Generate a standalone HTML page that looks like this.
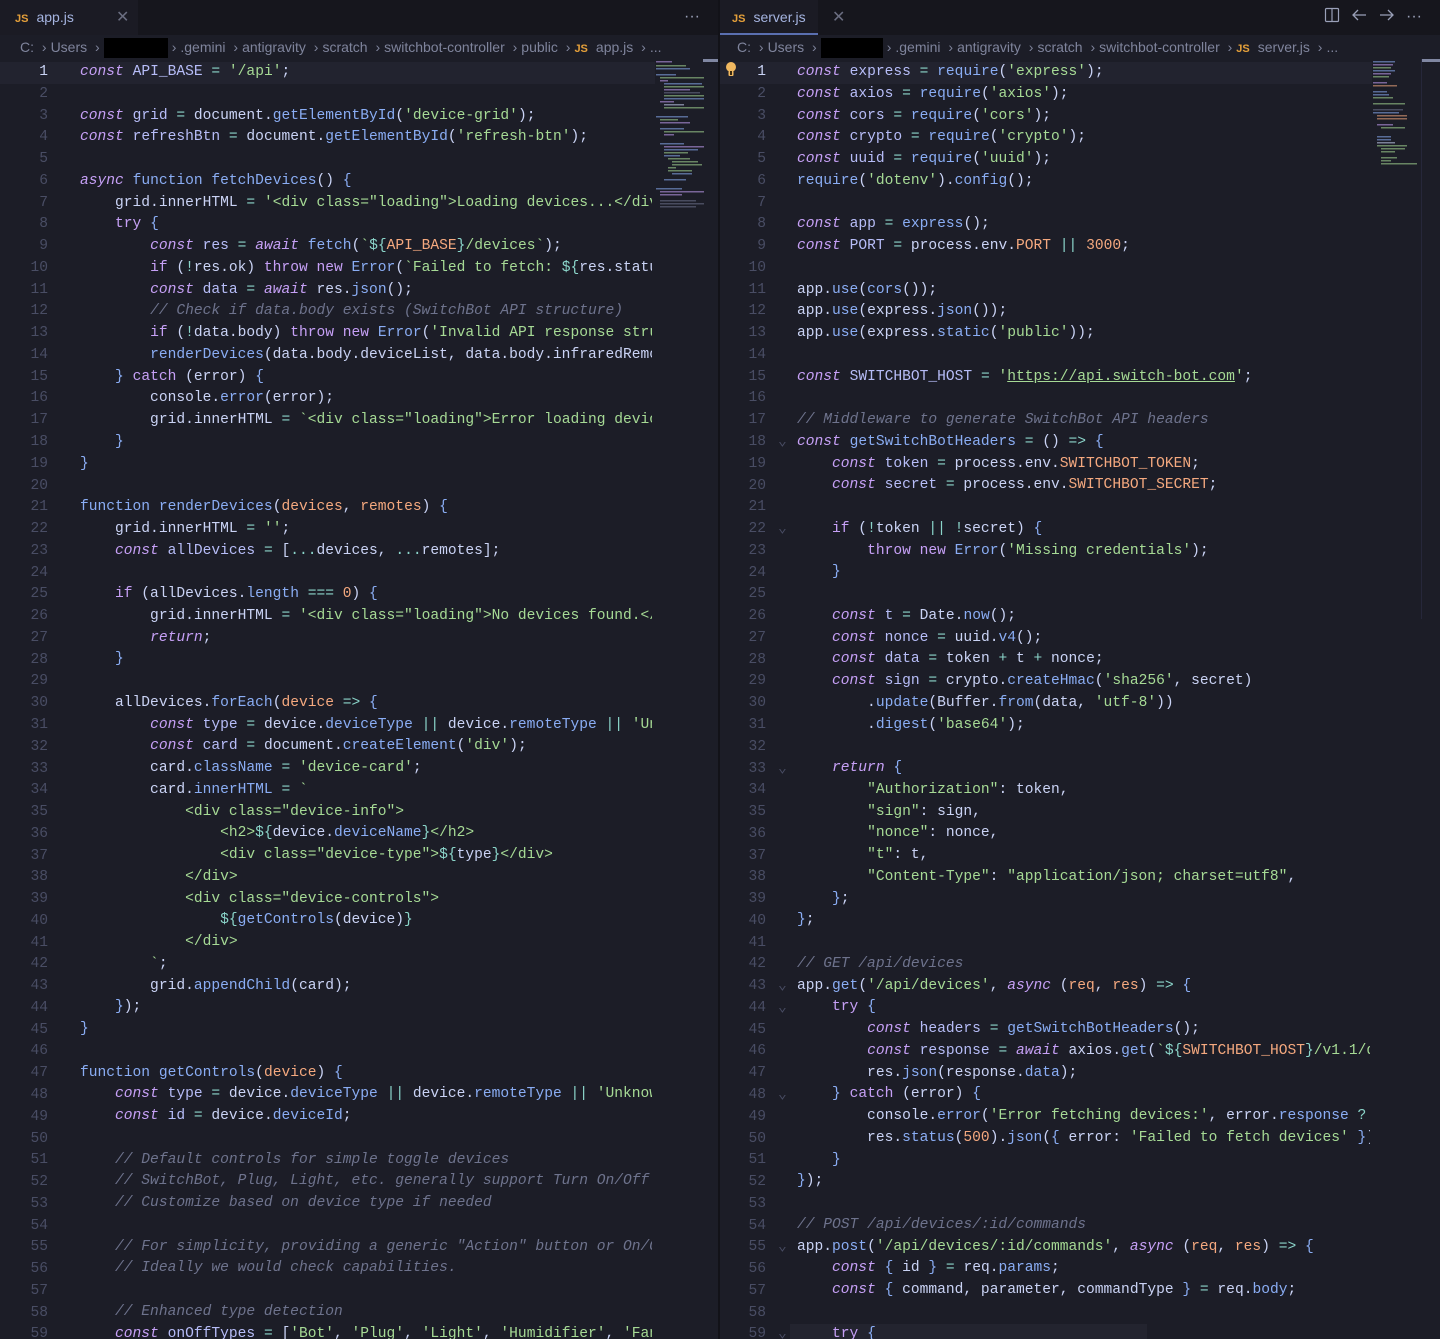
<!DOCTYPE html>
<html><head><meta charset="utf-8">
<style>
*{margin:0;padding:0;box-sizing:border-box}
html,body{width:1440px;height:1339px;overflow:hidden;background:#1c1d27}
body{position:relative;font-family:"Liberation Mono",monospace}
.pane{position:absolute;top:0;height:1339px;overflow:hidden;background:#1c1d27}
#L{left:0;width:718px}
#R{left:720px;width:720px}
#div{position:absolute;left:718px;top:0;width:2px;height:1339px;background:#121218}
.tabs{position:absolute;left:0;top:0;right:0;height:35px;background:#16161d}
.tab{position:absolute;left:0;top:0;height:35px;background:#1b1b24;font-family:"Liberation Sans",sans-serif;font-size:14px;color:#a5b4e0;line-height:35px;padding-left:15px}
.js{color:#e5a03a;font-weight:bold;font-size:11px;margin-right:8px}
.x{position:absolute;top:0;color:#6a6d80;font-size:16px}
.crumb{position:absolute;left:0;top:35px;right:0;height:24px;font-family:"Liberation Sans",sans-serif;font-size:14px;color:#7f849c;line-height:24px;padding-left:20px;white-space:nowrap}
.crumb i{font-style:normal;margin:0 4px;color:#7f849c}
.red{display:inline-block;width:64px;height:20px;background:#000;vertical-align:middle}
.nums{position:absolute;top:62px;text-align:right;font-size:14.6px;line-height:21.76px;color:#494d64;white-space:pre}
.code{position:absolute;top:62px;font-size:14.6px;line-height:21.76px;color:#cad3f5;white-space:normal;overflow:hidden;height:1280px}
.code div{height:21.76px;white-space:pre}
.k{color:#c6a0f6;font-style:italic}
.w{color:#c6a0f6}
.f{color:#8aadf4}
.s{color:#a6da95}
.n{color:#f5a97f}
.c{color:#6e738d;font-style:italic}
.o{color:#8bd5ca}
.v{color:#b7bdf8}
.b{color:#8aadf4}
.cur{position:absolute;top:62px;height:21.76px;background:#22232f}
.mm{position:absolute;top:59px}
.sb{position:absolute;top:59px;height:3px;background:#8087a2}
</style></head><body>

<div class="pane" id="L">
 <div class="tabs"><div class="tab" style="width:138px"><span class="js">JS</span>app.js<span class="x" style="left:116px">✕</span></div>
 <div style="position:absolute;right:18px;top:0;line-height:33px;color:#9aa0b8;font-size:16px;font-family:'Liberation Sans',sans-serif">···</div></div>
 <div class="crumb">C: <i>›</i>Users <i>›</i><span class="red"></span><i>›</i>.gemini <i>›</i>antigravity <i>›</i>scratch <i>›</i>switchbot-controller <i>›</i>public <i>›</i><span class="js">JS</span>app.js <i>›</i>...</div>
 <div class="cur" style="left:0;width:655px"></div>
 <div class="nums" style="left:0;width:48px"><span style="color:#cad3f5">1</span>
2
3
4
5
6
7
8
9
10
11
12
13
14
15
16
17
18
19
20
21
22
23
24
25
26
27
28
29
30
31
32
33
34
35
36
37
38
39
40
41
42
43
44
45
46
47
48
49
50
51
52
53
54
55
56
57
58
59</div>
 <div class="code" style="left:80px;width:572px">
<div><span class="k">const</span> <span class="v">API_BASE</span> <span class="o">=</span> <span class="s">'/api'</span>;</div>
<div></div>
<div><span class="k">const</span> <span class="v">grid</span> <span class="o">=</span> document.<span class="f">getElementById</span>(<span class="s">'device-grid'</span>);</div>
<div><span class="k">const</span> <span class="v">refreshBtn</span> <span class="o">=</span> document.<span class="f">getElementById</span>(<span class="s">'refresh-btn'</span>);</div>
<div></div>
<div><span class="k">async</span> <span class="f">function</span> <span class="f">fetchDevices</span>() <span class="b">{</span></div>
<div>    grid.innerHTML <span class="o">=</span> <span class="s">'&lt;div class="loading"&gt;Loading devices...&lt;/div&gt;'</span>;</div>
<div>    <span class="w">try</span> <span class="b">{</span></div>
<div>        <span class="k">const</span> <span class="v">res</span> <span class="o">=</span> <span class="k">await</span> <span class="f">fetch</span>(<span class="s">`</span><span class="o">${</span><span class="n">API_BASE</span><span class="o">}</span><span class="s">/devices`</span>);</div>
<div>        <span class="w">if</span> (<span class="o">!</span>res.ok) <span class="w">throw</span> <span class="w">new</span> <span class="f">Error</span>(<span class="s">`Failed to fetch: </span><span class="o">${</span>res.status<span class="o">}</span><span class="s">`</span>);</div>
<div>        <span class="k">const</span> <span class="v">data</span> <span class="o">=</span> <span class="k">await</span> res.<span class="f">json</span>();</div>
<div>        <span class="c">// Check if data.body exists (SwitchBot API structure)</span></div>
<div>        <span class="w">if</span> (<span class="o">!</span>data.body) <span class="w">throw</span> <span class="w">new</span> <span class="f">Error</span>(<span class="s">'Invalid API response structure'</span>);</div>
<div>        <span class="f">renderDevices</span>(data.body.deviceList, data.body.infraredRemoteList);</div>
<div>    <span class="b">}</span> <span class="w">catch</span> (error) <span class="b">{</span></div>
<div>        console.<span class="f">error</span>(error);</div>
<div>        grid.innerHTML <span class="o">=</span> <span class="s">`&lt;div class="loading"&gt;Error loading devices</span></div>
<div>    <span class="b">}</span></div>
<div><span class="b">}</span></div>
<div></div>
<div><span class="f">function</span> <span class="f">renderDevices</span>(<span class="n">devices</span>, <span class="n">remotes</span>) <span class="b">{</span></div>
<div>    grid.innerHTML <span class="o">=</span> <span class="s">''</span>;</div>
<div>    <span class="k">const</span> <span class="v">allDevices</span> <span class="o">=</span> [<span class="o">...</span>devices, <span class="o">...</span>remotes];</div>
<div></div>
<div>    <span class="w">if</span> (allDevices.<span class="f">length</span> <span class="o">===</span> <span class="n">0</span>) <span class="b">{</span></div>
<div>        grid.innerHTML <span class="o">=</span> <span class="s">'&lt;div class="loading"&gt;No devices found.&lt;/div&gt;'</span>;</div>
<div>        <span class="k">return</span>;</div>
<div>    <span class="b">}</span></div>
<div></div>
<div>    allDevices.<span class="f">forEach</span>(<span class="n">device</span> <span class="o">=&gt;</span> <span class="b">{</span></div>
<div>        <span class="k">const</span> <span class="v">type</span> <span class="o">=</span> device.<span class="f">deviceType</span> <span class="o">||</span> device.<span class="f">remoteType</span> <span class="o">||</span> <span class="s">'Unknown'</span>;</div>
<div>        <span class="k">const</span> <span class="v">card</span> <span class="o">=</span> document.<span class="f">createElement</span>(<span class="s">'div'</span>);</div>
<div>        card.<span class="f">className</span> <span class="o">=</span> <span class="s">'device-card'</span>;</div>
<div>        card.<span class="f">innerHTML</span> <span class="o">=</span> <span class="s">`</span></div>
<div><span class="s">            &lt;div class="device-info"&gt;</span></div>
<div><span class="s">                &lt;h2&gt;</span><span class="o">${</span>device.<span class="f">deviceName</span><span class="o">}</span><span class="s">&lt;/h2&gt;</span></div>
<div><span class="s">                &lt;div class="device-type"&gt;</span><span class="o">${</span>type<span class="o">}</span><span class="s">&lt;/div&gt;</span></div>
<div><span class="s">            &lt;/div&gt;</span></div>
<div><span class="s">            &lt;div class="device-controls"&gt;</span></div>
<div><span class="s">                </span><span class="o">${</span><span class="f">getControls</span>(device)<span class="o">}</span></div>
<div><span class="s">            &lt;/div&gt;</span></div>
<div><span class="s">        `</span>;</div>
<div>        grid.<span class="f">appendChild</span>(card);</div>
<div>    <span class="b">}</span>);</div>
<div><span class="b">}</span></div>
<div></div>
<div><span class="f">function</span> <span class="f">getControls</span>(<span class="n">device</span>) <span class="b">{</span></div>
<div>    <span class="k">const</span> <span class="v">type</span> <span class="o">=</span> device.<span class="f">deviceType</span> <span class="o">||</span> device.<span class="f">remoteType</span> <span class="o">||</span> <span class="s">'Unknown'</span>;</div>
<div>    <span class="k">const</span> <span class="v">id</span> <span class="o">=</span> device.<span class="f">deviceId</span>;</div>
<div></div>
<div>    <span class="c">// Default controls for simple toggle devices</span></div>
<div>    <span class="c">// SwitchBot, Plug, Light, etc. generally support Turn On/Off</span></div>
<div>    <span class="c">// Customize based on device type if needed</span></div>
<div></div>
<div>    <span class="c">// For simplicity, providing a generic "Action" button or On/Off</span></div>
<div>    <span class="c">// Ideally we would check capabilities.</span></div>
<div></div>
<div>    <span class="c">// Enhanced type detection</span></div>
<div>    <span class="k">const</span> <span class="v">onOffTypes</span> <span class="o">=</span> [<span class="s">'Bot'</span>, <span class="s">'Plug'</span>, <span class="s">'Light'</span>, <span class="s">'Humidifier'</span>, <span class="s">'Fan'</span>];</div>
 </div>
 <svg class="mm" style="left:656px" width="48" height="160">
  <g opacity="0.55">
  <rect x="0" y="2" width="16" height="1.5" fill="#c6a0f6"/><rect x="0" y="6" width="30" height="1.5" fill="#a6da95"/><rect x="0" y="9" width="34" height="1.5" fill="#8aadf4"/>
  <rect x="0" y="15" width="20" height="1.5" fill="#8aadf4"/><rect x="4" y="18" width="44" height="1.5" fill="#a6da95"/><rect x="4" y="21" width="8" height="1.5" fill="#c6a0f6"/>
  <rect x="8" y="24" width="38" height="1.5" fill="#8aadf4"/><rect x="8" y="27" width="40" height="1.5" fill="#a6da95"/><rect x="8" y="30" width="26" height="1.5" fill="#c6a0f6"/><rect x="8" y="33" width="36" height="1.5" fill="#6e738d"/><rect x="8" y="36" width="40" height="1.5" fill="#a6da95"/><rect x="8" y="39" width="40" height="1.5" fill="#8aadf4"/>
  <rect x="4" y="42" width="14" height="1.5" fill="#c6a0f6"/><rect x="8" y="45" width="20" height="1.5" fill="#cad3f5"/><rect x="8" y="48" width="40" height="1.5" fill="#a6da95"/>
  <rect x="0" y="57" width="32" height="1.5" fill="#8aadf4"/><rect x="4" y="60" width="18" height="1.5" fill="#a6da95"/><rect x="4" y="63" width="30" height="1.5" fill="#c6a0f6"/>
  <rect x="4" y="69" width="24" height="1.5" fill="#8aadf4"/><rect x="8" y="72" width="40" height="1.5" fill="#a6da95"/><rect x="8" y="75" width="10" height="1.5" fill="#c6a0f6"/>
  <rect x="4" y="84" width="24" height="1.5" fill="#8aadf4"/><rect x="8" y="87" width="40" height="1.5" fill="#c6a0f6"/><rect x="8" y="90" width="34" height="1.5" fill="#8aadf4"/><rect x="8" y="93" width="24" height="1.5" fill="#a6da95"/><rect x="8" y="96" width="16" height="1.5" fill="#8aadf4"/>
  <rect x="12" y="99" width="22" height="1.5" fill="#a6da95"/><rect x="16" y="102" width="26" height="1.5" fill="#a6da95"/><rect x="16" y="105" width="30" height="1.5" fill="#a6da95"/><rect x="12" y="108" width="8" height="1.5" fill="#a6da95"/><rect x="12" y="111" width="24" height="1.5" fill="#a6da95"/><rect x="16" y="114" width="20" height="1.5" fill="#8aadf4"/><rect x="8" y="120" width="22" height="1.5" fill="#8aadf4"/>
  <rect x="0" y="129" width="26" height="1.5" fill="#8aadf4"/><rect x="4" y="132" width="44" height="1.5" fill="#c6a0f6"/><rect x="4" y="135" width="22" height="1.5" fill="#c6a0f6"/><rect x="4" y="141" width="36" height="1.5" fill="#6e738d"/><rect x="4" y="144" width="44" height="1.5" fill="#6e738d"/><rect x="4" y="147" width="36" height="1.5" fill="#6e738d"/>
  </g>
 </svg>
 <div class="sb" style="left:703px;width:15px"></div>
</div>

<div id="div"></div>

<div class="pane" id="R">
 <div class="tabs"><div class="tab" style="width:98px;border-bottom:2px solid #5a6fb0;padding-left:12px"><span class="js">JS</span>server.js<span class="x" style="left:112px">✕</span></div>
 <div style="position:absolute;right:18px;top:0;line-height:33px;color:#9aa0b8;font-size:16px;font-family:'Liberation Sans',sans-serif;white-space:nowrap">
  <svg width="16" height="16" viewBox="0 0 16 16" style="vertical-align:-2px;margin-right:10px"><rect x="1.5" y="1.5" width="13" height="13" rx="1" fill="none" stroke="#9aa0b8" stroke-width="1.2"/><line x1="8" y1="1.5" x2="8" y2="14.5" stroke="#9aa0b8" stroke-width="1.2"/></svg><svg width="18" height="16" viewBox="0 0 18 16" style="vertical-align:-2px;margin-right:10px"><path d="M16 8H3M8 3L3 8l5 5" fill="none" stroke="#9aa0b8" stroke-width="1.3"/></svg><svg width="18" height="16" viewBox="0 0 18 16" style="vertical-align:-2px;margin-right:10px"><path d="M2 8h13M10 3l5 5-5 5" fill="none" stroke="#9aa0b8" stroke-width="1.3"/></svg>···</div></div>
 <div class="crumb" style="padding-left:17px">C: <i>›</i>Users <i>›</i><span class="red" style="width:62px"></span><i>›</i>.gemini <i>›</i>antigravity <i>›</i>scratch <i>›</i>switchbot-controller <i>›</i><span class="js">JS</span>server.js <i>›</i>...</div>
 <div class="cur" style="left:0;width:652px"></div>
 <div class="cur" style="left:70px;width:357px;top:1324px;background:#23242f"></div>
 <svg style="position:absolute;left:5px;top:61px" width="12" height="18" viewBox="0 0 12 18"><circle cx="6" cy="6" r="5" fill="#f0b860"/><rect x="3.5" y="10" width="5" height="5" rx="1" fill="#f0b860"/><rect x="5" y="10" width="2" height="4" fill="#3a2a10"/></svg>
 <div class="nums" style="left:0;width:46px"><span style="color:#cad3f5">1</span>
2
3
4
5
6
7
8
9
10
11
12
13
14
15
16
17
18
19
20
21
22
23
24
25
26
27
28
29
30
31
32
33
34
35
36
37
38
39
40
41
42
43
44
45
46
47
48
49
50
51
52
53
54
55
56
57
58
59</div>
 <div class="nums" style="left:58px;width:14px;color:#494d64;text-align:left">















 
⌄



⌄










⌄









⌄
⌄



⌄






⌄



⌄</div>
 <div class="code" style="left:77px;width:573px">
<div><span class="k">const</span> <span class="v">express</span> <span class="o">=</span> <span class="f">require</span>(<span class="s">'express'</span>);</div>
<div><span class="k">const</span> <span class="v">axios</span> <span class="o">=</span> <span class="f">require</span>(<span class="s">'axios'</span>);</div>
<div><span class="k">const</span> <span class="v">cors</span> <span class="o">=</span> <span class="f">require</span>(<span class="s">'cors'</span>);</div>
<div><span class="k">const</span> <span class="v">crypto</span> <span class="o">=</span> <span class="f">require</span>(<span class="s">'crypto'</span>);</div>
<div><span class="k">const</span> <span class="v">uuid</span> <span class="o">=</span> <span class="f">require</span>(<span class="s">'uuid'</span>);</div>
<div><span class="f">require</span>(<span class="s">'dotenv'</span>).<span class="f">config</span>();</div>
<div></div>
<div><span class="k">const</span> <span class="v">app</span> <span class="o">=</span> <span class="f">express</span>();</div>
<div><span class="k">const</span> <span class="v">PORT</span> <span class="o">=</span> process.env.<span class="n">PORT</span> <span class="o">||</span> <span class="n">3000</span>;</div>
<div></div>
<div>app.<span class="f">use</span>(<span class="f">cors</span>());</div>
<div>app.<span class="f">use</span>(express.<span class="f">json</span>());</div>
<div>app.<span class="f">use</span>(express.<span class="f">static</span>(<span class="s">'public'</span>));</div>
<div></div>
<div><span class="k">const</span> <span class="v">SWITCHBOT_HOST</span> <span class="o">=</span> <span class="s">'<u>https://api.switch-bot.com</u>'</span>;</div>
<div></div>
<div><span class="c">// Middleware to generate SwitchBot API headers</span></div>
<div><span class="k">const</span> <span class="f">getSwitchBotHeaders</span> <span class="o">=</span> () <span class="o">=&gt;</span> <span class="b">{</span></div>
<div>    <span class="k">const</span> <span class="v">token</span> <span class="o">=</span> process.env.<span class="n">SWITCHBOT_TOKEN</span>;</div>
<div>    <span class="k">const</span> <span class="v">secret</span> <span class="o">=</span> process.env.<span class="n">SWITCHBOT_SECRET</span>;</div>
<div></div>
<div>    <span class="w">if</span> (<span class="o">!</span>token <span class="o">||</span> <span class="o">!</span>secret) <span class="b">{</span></div>
<div>        <span class="w">throw</span> <span class="w">new</span> <span class="f">Error</span>(<span class="s">'Missing credentials'</span>);</div>
<div>    <span class="b">}</span></div>
<div></div>
<div>    <span class="k">const</span> <span class="v">t</span> <span class="o">=</span> Date.<span class="f">now</span>();</div>
<div>    <span class="k">const</span> <span class="v">nonce</span> <span class="o">=</span> uuid.<span class="f">v4</span>();</div>
<div>    <span class="k">const</span> <span class="v">data</span> <span class="o">=</span> token <span class="o">+</span> t <span class="o">+</span> nonce;</div>
<div>    <span class="k">const</span> <span class="v">sign</span> <span class="o">=</span> crypto.<span class="f">createHmac</span>(<span class="s">'sha256'</span>, secret)</div>
<div>        .<span class="f">update</span>(Buffer.<span class="f">from</span>(data, <span class="s">'utf-8'</span>))</div>
<div>        .<span class="f">digest</span>(<span class="s">'base64'</span>);</div>
<div></div>
<div>    <span class="k">return</span> <span class="b">{</span></div>
<div>        <span class="s">"Authorization"</span>: token,</div>
<div>        <span class="s">"sign"</span>: sign,</div>
<div>        <span class="s">"nonce"</span>: nonce,</div>
<div>        <span class="s">"t"</span>: t,</div>
<div>        <span class="s">"Content-Type"</span>: <span class="s">"application/json; charset=utf8"</span>,</div>
<div>    <span class="b">}</span>;</div>
<div><span class="b">}</span>;</div>
<div></div>
<div><span class="c">// GET /api/devices</span></div>
<div>app.<span class="f">get</span>(<span class="s">'/api/devices'</span>, <span class="k">async</span> (<span class="n">req</span>, <span class="n">res</span>) <span class="o">=&gt;</span> <span class="b">{</span></div>
<div>    <span class="w">try</span> <span class="b">{</span></div>
<div>        <span class="k">const</span> <span class="v">headers</span> <span class="o">=</span> <span class="f">getSwitchBotHeaders</span>();</div>
<div>        <span class="k">const</span> <span class="v">response</span> <span class="o">=</span> <span class="k">await</span> axios.<span class="f">get</span>(<span class="s">`</span><span class="o">${</span><span class="n">SWITCHBOT_HOST</span><span class="o">}</span><span class="s">/v1.1/devices`</span>, { headers });</div>
<div>        res.<span class="f">json</span>(response.<span class="f">data</span>);</div>
<div>    <span class="b">}</span> <span class="w">catch</span> (error) <span class="b">{</span></div>
<div>        console.<span class="f">error</span>(<span class="s">'Error fetching devices:'</span>, error.<span class="f">response</span> <span class="o">?</span> error.response.data : error.message);</div>
<div>        res.<span class="f">status</span>(<span class="n">500</span>).<span class="f">json</span>(<span class="b">{</span> error: <span class="s">'Failed to fetch devices'</span> <span class="b">}</span>);</div>
<div>    <span class="b">}</span></div>
<div><span class="b">}</span>);</div>
<div></div>
<div><span class="c">// POST /api/devices/:id/commands</span></div>
<div>app.<span class="f">post</span>(<span class="s">'/api/devices/:id/commands'</span>, <span class="k">async</span> (<span class="n">req</span>, <span class="n">res</span>) <span class="o">=&gt;</span> <span class="b">{</span></div>
<div>    <span class="k">const</span> <span class="b">{</span> id <span class="b">}</span> <span class="o">=</span> req.<span class="f">params</span>;</div>
<div>    <span class="k">const</span> <span class="b">{</span> command, parameter, commandType <span class="b">}</span> <span class="o">=</span> req.<span class="f">body</span>;</div>
<div></div>
<div>    <span class="w">try</span> <span class="b">{</span></div>
 </div>
 <svg class="mm" style="left:653px" width="48" height="110">
  <g opacity="0.55">
  <rect x="0" y="2" width="22" height="1.5" fill="#8aadf4"/><rect x="0" y="5" width="20" height="1.5" fill="#c6a0f6"/><rect x="0" y="8" width="18" height="1.5" fill="#a6da95"/><rect x="0" y="11" width="22" height="1.5" fill="#8aadf4"/><rect x="0" y="14" width="18" height="1.5" fill="#c6a0f6"/><rect x="0" y="17" width="16" height="1.5" fill="#a6da95"/>
  <rect x="0" y="23" width="14" height="1.5" fill="#c6a0f6"/><rect x="0" y="26" width="24" height="1.5" fill="#f5a97f"/><rect x="0" y="32" width="14" height="1.5" fill="#8aadf4"/><rect x="0" y="35" width="16" height="1.5" fill="#8aadf4"/><rect x="0" y="38" width="20" height="1.5" fill="#a6da95"/>
  <rect x="0" y="44" width="32" height="1.5" fill="#a6da95"/><rect x="0" y="50" width="30" height="1.5" fill="#6e738d"/><rect x="0" y="53" width="26" height="1.5" fill="#8aadf4"/><rect x="4" y="56" width="30" height="1.5" fill="#f5a97f"/><rect x="4" y="59" width="30" height="1.5" fill="#f5a97f"/>
  <rect x="4" y="65" width="16" height="1.5" fill="#c6a0f6"/><rect x="8" y="68" width="24" height="1.5" fill="#a6da95"/><rect x="4" y="77" width="14" height="1.5" fill="#8aadf4"/><rect x="4" y="80" width="14" height="1.5" fill="#8aadf4"/><rect x="4" y="83" width="18" height="1.5" fill="#cad3f5"/><rect x="4" y="86" width="30" height="1.5" fill="#a6da95"/><rect x="8" y="89" width="24" height="1.5" fill="#a6da95"/><rect x="8" y="92" width="14" height="1.5" fill="#a6da95"/>
  <rect x="8" y="98" width="16" height="1.5" fill="#a6da95"/><rect x="8" y="101" width="10" height="1.5" fill="#a6da95"/><rect x="8" y="104" width="36" height="1.5" fill="#a6da95"/>
  </g>
 </svg>
 <div class="sb" style="left:702px;width:18px"></div>
 <div style="position:absolute;left:701px;top:59px;width:1px;height:560px;background:#26273a"></div>
</div>
</body></html>
